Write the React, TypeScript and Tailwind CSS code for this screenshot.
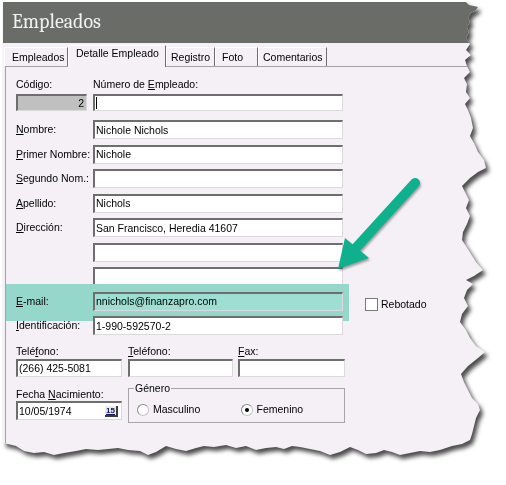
import type { ReactNode } from 'react'

// torn outline of the screenshot, in page coordinates
const outline: [number, number][] = [
  [3, 2], [466, 2], [469, 5], [478, 7], [476, 10], [471, 13], [468, 17], [470, 22], [467, 27], [469, 32],
  [466, 38], [470, 44], [466, 50], [471, 55], [465, 60], [467, 66], [470, 72], [464, 78], [467, 84],
  [466, 92], [470, 98], [465, 104], [468, 110], [471, 118], [473, 128], [470, 136], [475, 145],
  [478, 152], [484, 160], [486, 168], [478, 172], [470, 178], [462, 186], [465, 192], [469, 200],
  [466, 208], [470, 216], [467, 224], [463, 232], [462, 240], [466, 246], [471, 254], [476, 262],
  [483, 270], [474, 276], [466, 280], [473, 284], [467, 290], [464, 298], [468, 306], [462, 314],
  [460, 322], [466, 330], [470, 338], [476, 346], [485, 352], [478, 358], [468, 366], [461, 374],
  [464, 382], [468, 390], [472, 398], [478, 404], [480, 410], [476, 418], [474, 426], [472, 434],
  [470, 440], [462, 444], [452, 446], [440, 450], [430, 452], [420, 451], [410, 453], [400, 455],
  [392, 452], [384, 450], [376, 453], [366, 454], [358, 450], [350, 447], [340, 452], [330, 455],
  [320, 451], [310, 449], [300, 447], [292, 446], [284, 449], [276, 447], [266, 448], [256, 450],
  [246, 446], [236, 448], [226, 445], [214, 447], [204, 446], [196, 448], [186, 451], [176, 449],
  [166, 446], [156, 452], [148, 455], [140, 451], [128, 450], [118, 448], [108, 449], [98, 450],
  [86, 449], [76, 451], [64, 453], [54, 455], [44, 452], [34, 453], [24, 451], [16, 446], [8, 444],
  [3, 443],
]

const clip = `polygon(${outline.map(([x, y]) => `${x - 3}px ${y - 2}px`).join(', ')})`

const sunken =
  'border-t-2 border-l-2 border-r border-b border-t-[#6e6e6e] border-l-[#6e6e6e] border-r-[#dcd8de] border-b-[#dcd8de]'

function U({ children }: { children: ReactNode }) {
  return <span className="underline underline-offset-[1px]">{children}</span>
}

function Row({ label, value }: { label: ReactNode; value?: string }) {
  return (
    <div className="flex h-[19px] items-center">
      <div className="w-[77px] leading-[13px]">{label}</div>
      <div className={`${sunken} flex h-[19px] w-[250px] items-center bg-white pl-[1px] leading-[13px]`}>{value}</div>
    </div>
  )
}

function Radio({ checked, label }: { checked?: boolean; label: string }) {
  return (
    <div className="flex w-[105px] items-center gap-[4px]">
      <span className="flex h-[12px] w-[12px] items-center justify-center rounded-full border border-[#c4c4c4] border-t-[#8a8a8a] border-l-[#8a8a8a] bg-white">
        {checked && <span className="h-[4px] w-[4px] rounded-full bg-black" />}
      </span>
      <span className="leading-[13px]">{label}</span>
    </div>
  )
}

const tabs = [
  { label: 'Empleados', cls: 'w-[64px] h-[19px] pl-[7px] items-center' },
  { label: 'Detalle Empleado', cls: 'w-[98px] h-[22px] -mb-[1px] pl-[7px] pt-[1px] items-start z-10 relative' },
  { label: 'Registro', cls: 'w-[49px] h-[19px] pl-[4px] items-center' },
  { label: 'Foto', cls: 'w-[43px] h-[19px] pl-[6px] items-center' },
  { label: 'Comentarios', cls: 'w-[69px] h-[19px] pl-[4px] items-center' },
]

export default function App() {
  return (
    <div className="relative h-[485px] w-[506px] overflow-hidden bg-white text-[10.5px] text-black [font-family:Liberation_Sans,Arial,sans-serif]">
      <div className="pl-[3px] pt-[2px] [filter:drop-shadow(3px_4px_2px_rgba(0,0,0,0.7))]">
        <div className="flex h-[458px] w-[484px] flex-col bg-[#f4f0f6]" style={{ clipPath: clip }}>
          {/* title */}
          <div className="h-[41px] shrink-0 bg-[#6a6c68] pl-[9px] pt-[8px] font-serif text-[20px] leading-[23px] text-[#f2f2f2] [font-family:Liberation_Serif,Times_New_Roman,serif]">
            Empleados
          </div>

          {/* tabs */}
          <div className="flex h-[23px] shrink-0 items-end pl-[1px]">
            {tabs.map((t) => (
              <div
                key={t.label}
                className={`flex border-l border-t border-r border-l-white border-t-white border-r-[#6e6e6e] bg-[#f4f0f6] leading-[13px] ${t.cls}`}
              >
                {t.label}
              </div>
            ))}
          </div>

          {/* panel */}
          <div className="ml-[2px] flex-1 border-l border-t border-[#a4a0a8] pl-[10px] pt-[11px]">
            <div className="flex gap-[6px] leading-[13px]">
              <div className="w-[71px]">Código:</div>
              <div>
                Número de <U>E</U>mpleado:
              </div>
            </div>
            <div className="mt-[3px] flex gap-[6px]">
              <div className={`${sunken} flex h-[17px] w-[71px] items-center justify-end bg-[#c0c0c0] pr-[2px] leading-[13px]`}>2</div>
              <div className={`${sunken} flex h-[17px] w-[250px] items-center bg-white pl-[1px]`}>
                <span className="h-[12px] w-[1px] bg-black" />
              </div>
            </div>

            <div className="mt-[9px] flex flex-col gap-[5.5px]">
              <Row label={<><U>N</U>ombre:</>} value="Nichole Nichols" />
              <Row label={<><U>P</U>rimer Nombre:</>} value="Nichole" />
              <Row label={<><U>S</U>egundo Nom.:</>} />
              <Row label={<><U>A</U>pellido:</>} value="Nichols" />
              <Row label={<><U>D</U>irección:</>} value="San Francisco, Heredia 41607" />
              <Row label="" />
              <Row label="" />
              <div className="flex h-[19px] items-start">
                <div className="-ml-[10px] -mt-[8px] flex items-start bg-[#96d7cc] pb-[10px] pl-[10px] pr-[6px] pt-[8px]">
                  <div className="flex h-[19px] w-[77px] items-center leading-[13px]">
                    <U>E</U>-mail:
                  </div>
                  <div className={`${sunken} flex h-[19px] w-[250px] items-center bg-[#9ddfd3] pl-[1px] leading-[13px]`}>
                    nnichols@finanzapro.com
                  </div>
                </div>
                <div className="ml-[16px] mt-[6px] flex items-center gap-[3px]">
                  <span className="h-[13px] w-[13px] border border-[#7a7a7a] bg-white" />
                  <span className="leading-[13px]">Rebotado</span>
                </div>
              </div>
              <Row label={<><U>I</U>dentificación:</>} value="1-990-592570-2" />
            </div>

            <div className="mt-[10px] flex leading-[13px]">
              <div className="w-[112px]">
                Telé<U>f</U>ono:
              </div>
              <div className="w-[110px]">
                <U>T</U>eléfono:
              </div>
              <div>
                <U>F</U>ax:
              </div>
            </div>
            <div className="mt-[1px] flex">
              <div className={`${sunken} flex h-[18px] w-[106px] items-center bg-white pl-[1px] leading-[13px]`}>(266) 425-5081</div>
              <div className={`${sunken} ml-[6px] h-[18px] w-[105px] bg-white`} />
              <div className={`${sunken} ml-[5px] h-[18px] w-[107px] bg-white`} />
            </div>

            <div className="mt-[11px] flex">
              <div className="w-[112px]">
                <div className="leading-[13px]">
                  Fecha <U>N</U>acimiento:
                </div>
                <div className={`${sunken} flex h-[19px] w-[106px] items-center justify-between bg-white pl-[1px] pr-[3px] leading-[13px]`}>
                  <span>10/05/1974</span>
                  <span className="border-b-2 border-r-2 border-[#3c3c3c] bg-[#ececec] px-[1px] text-[8px] font-bold leading-[9px] text-[#101060] underline">
                    15
                  </span>
                </div>
              </div>
              <div className="relative h-[35px] w-[217px] border border-[#a8a4ac]">
                <span className="absolute -top-[7px] left-[5px] bg-[#f4f0f6] px-[1px] leading-[13px]">Género</span>
                <div className="flex pl-[8px] pt-[14px]">
                  <Radio label="Masculino" />
                  <Radio label="Femenino" checked />
                </div>
              </div>
            </div>
          </div>
        </div>
      </div>

      {/* callout arrow */}
      <svg
        className="pointer-events-none absolute left-0 top-0 [filter:drop-shadow(1px_2px_1px_rgba(0,0,0,0.35))]"
        width="506"
        height="485"
        viewBox="0 0 506 485"
      >
        <line x1="415" y1="183" x2="354" y2="250" stroke="#0eb18c" strokeWidth="10" strokeLinecap="round" />
        <polygon points="338,269 345,238 369,258" fill="#0eb18c" />
      </svg>
    </div>
  )
}
